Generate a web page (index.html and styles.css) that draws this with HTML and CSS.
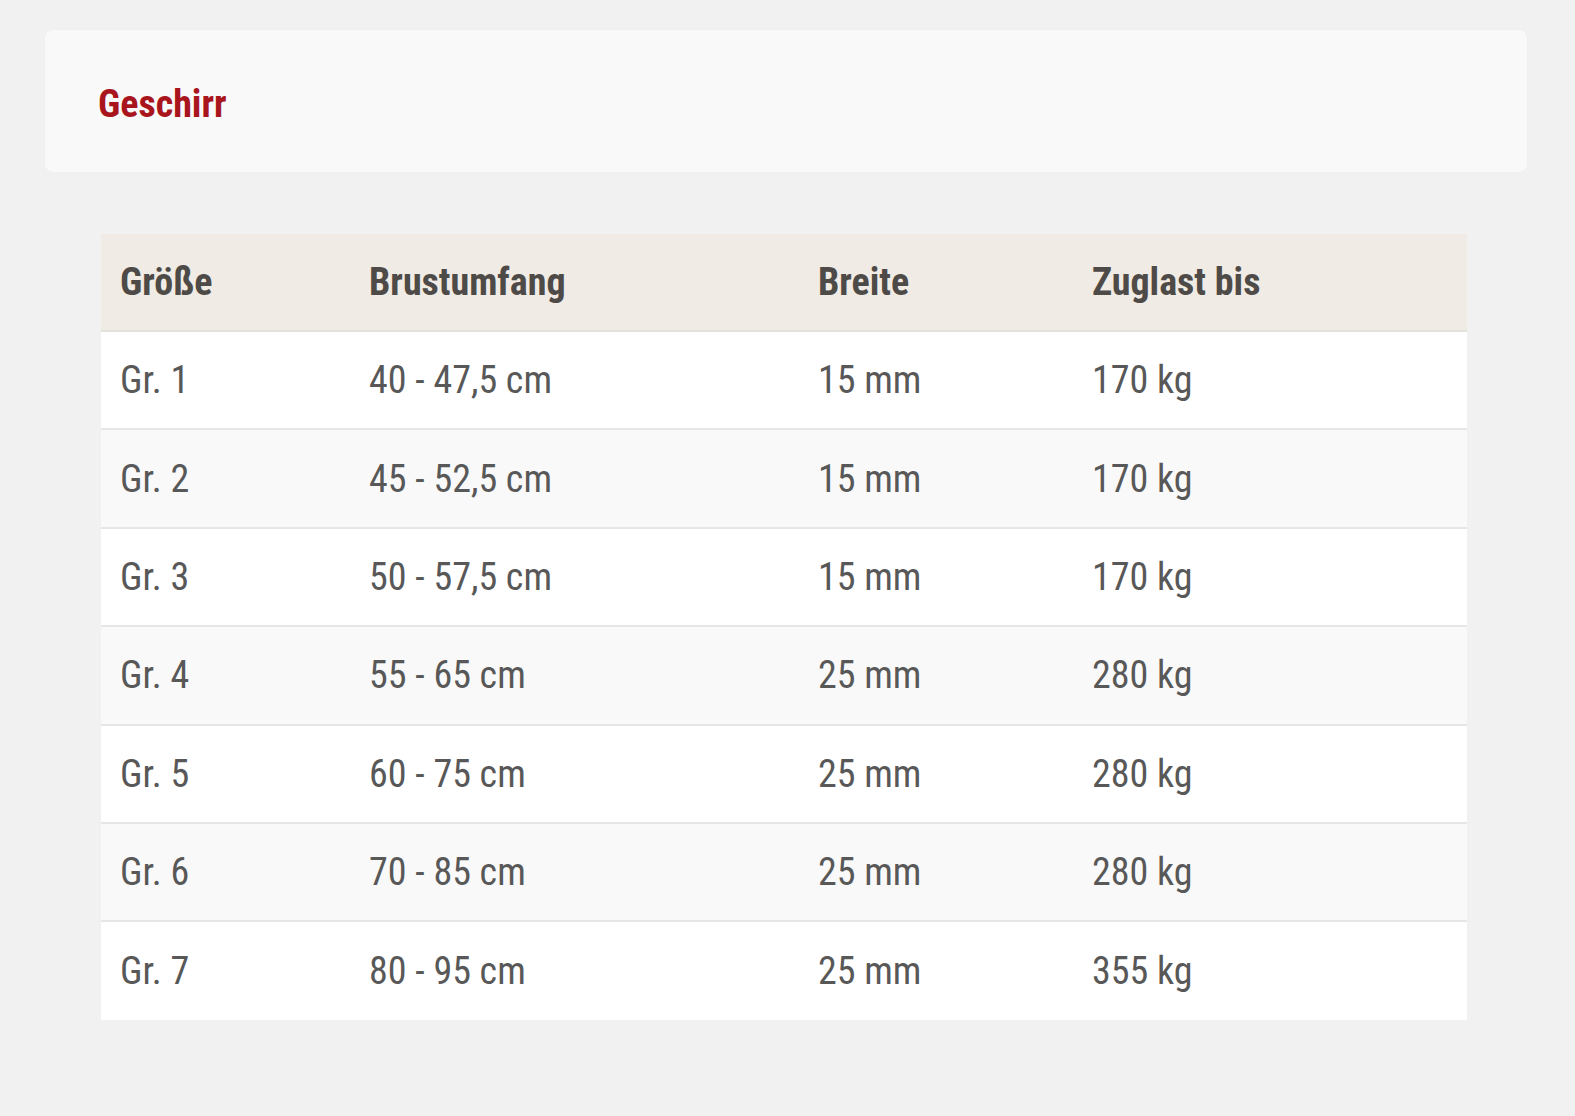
FILE: index.html
```html
<!DOCTYPE html>
<html lang="de">
<head>
<meta charset="utf-8">
<title>Geschirr</title>
<link rel="stylesheet" href="styles.css">
</head>
<body>
<div class="page">
  <div class="card">
    <h2 class="title">Geschirr</h2>
  </div>
  <table class="sizes">
    <thead>
      <tr><th class="c1">Größe</th><th class="c2">Brustumfang</th><th class="c3">Breite</th><th class="c4">Zuglast bis</th></tr>
    </thead>
    <tbody>
      <tr><td>Gr. 1</td><td>40 - 47,5 cm</td><td>15 mm</td><td>170 kg</td></tr>
      <tr><td>Gr. 2</td><td>45 - 52,5 cm</td><td>15 mm</td><td>170 kg</td></tr>
      <tr><td>Gr. 3</td><td>50 - 57,5 cm</td><td>15 mm</td><td>170 kg</td></tr>
      <tr><td>Gr. 4</td><td>55 - 65 cm</td><td>25 mm</td><td>280 kg</td></tr>
      <tr><td>Gr. 5</td><td>60 - 75 cm</td><td>25 mm</td><td>280 kg</td></tr>
      <tr><td>Gr. 6</td><td>70 - 85 cm</td><td>25 mm</td><td>280 kg</td></tr>
      <tr><td>Gr. 7</td><td>80 - 95 cm</td><td>25 mm</td><td>355 kg</td></tr>
    </tbody>
  </table>
</div>
</body>
</html>
```

FILE: styles.css
```css
html, body {
  margin: 0;
  padding: 0;
  background: #f1f1f1;
}
body {
  font-family: "Roboto Condensed", Roboto, "Liberation Sans", sans-serif;
  font-stretch: condensed;
  color: #555555;
}
.page {
  padding: 30px 48px 0 45px;
}
.card {
  background: #f9f9f9;
  border-radius: 8px;
  height: 142px;
  box-sizing: border-box;
  padding: 6px 53px 0;
  display: flex;
  align-items: center;
  box-shadow: 0 0 2px rgba(0,0,0,0.03);
}
.title {
  margin: 0;
  font-size: 38px;
  font-weight: 700;
  color: #a8151d;
  line-height: 1;
}
.sizes {
  margin: 62px 0 0 56px;
  width: 1366px;
  border-collapse: collapse;
  table-layout: fixed;
  font-size: 38px;
}
.sizes th, .sizes td {
  box-sizing: border-box;
  text-align: left;
  padding: 0 0 0 19px;
  vertical-align: middle;
}
.c1 { width: 249px; }
.c2 { width: 449px; }
.c3 { width: 274px; }
.c4 { width: 394px; }
.sizes thead tr {
  background: #f0ebe4;
  height: 97px;
}
.sizes th {
  font-weight: 700;
  color: #4d4a47;
  border-bottom: 2px solid #e4e2df;
}
.sizes tbody tr {
  height: 98.4px;
  background: #ffffff;
  border-bottom: 2px solid #e6e6e6;
}
.sizes tbody tr:nth-child(even) {
  background: #f9f9f9;
}
.sizes tbody tr:last-child {
  border-bottom: none;
}
.sizes td {
  font-weight: 400;
  color: #585858;
}
```
